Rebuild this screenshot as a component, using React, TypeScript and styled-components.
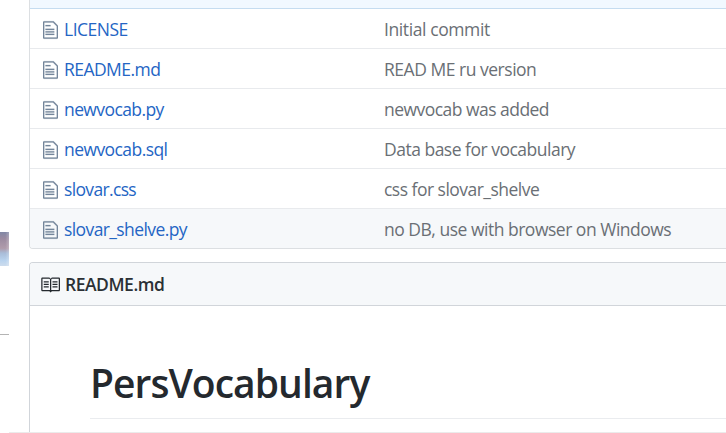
import React from 'react';
import styled, { createGlobalStyle } from 'styled-components';

const GlobalStyle = createGlobalStyle`
  * { box-sizing: border-box; }
  body {
    margin: 0;
    background: #fff;
    overflow: hidden;
    font-family: 'Open Sans', 'Noto Sans', sans-serif;
  }
`;

const Page = styled.div`
  display: flex;
  width: 726px;
  height: 433px;
  overflow: hidden;
`;

const Sidebar = styled.aside`
  width: 9px;
  flex: none;
  padding-top: 232px;
`;

const Photo = styled.div`
  height: 34px;
  background:
    linear-gradient(90deg, transparent 60%, rgba(255, 255, 255, 0.25)),
    linear-gradient(#8187a5 0%, #9c8ba0 20%, #b09bab 48%, #a9bcd8 62%, #b9d3ee 84%, #cddced 100%);
`;

const SidebarRule = styled.div`
  height: 1px;
  margin-top: 68px;
  background: #b4b4b4;
`;

const Main = styled.main`
  width: 717px;
  flex: none;
  display: flex;
  flex-direction: column;
  padding-left: 20px;
  border-bottom: 1px solid #ebebeb;
`;

const FileBox = styled.section`
  height: 249px;
  flex: none;
  border: solid #dcdfe2;
  border-width: 0 0 1px 1px;
  border-radius: 0 0 0 4px;
  overflow: hidden;
`;

const CommitBar = styled.div`
  height: 9px;
  background: #f1f8ff;
  border-bottom: 1px solid #c5dcf0;
`;

const Row = styled.div<{ $active?: boolean }>`
  display: grid;
  grid-template-columns: 15px 314px 1fr;
  column-gap: 6px;
  align-items: center;
  height: 40px;
  padding-left: 13px;
  background: ${(p) => (p.$active ? '#f6f8fa' : '#fff')};
  border-bottom: 1px solid #e8eaed;
  &:last-child { height: 39px; border-bottom: 0; }
`;

const Label = styled.span<{ $spacing: number }>`
  font-size: 17.5px;
  line-height: 24px;
  letter-spacing: ${(p) => p.$spacing}px;
  white-space: pre;
`;

const FileName = styled(Label)`
  color: #2465c4;
`;

const Message = styled(Label)`
  color: #6a6f75;
`;

const Icon = styled.svg<{ $w: number; $color: string }>`
  width: ${(p) => p.$w}px;
  height: 20px;
  display: block;
  fill: ${(p) => p.$color};
`;

const FileGlyph = styled(Icon)`
  margin-top: 2px;
  stroke: #74859a;
  stroke-width: 0.15;
`;

const BookGlyph = styled(Icon)`
  margin-top: 1px;
`;

const ReadmeBox = styled.section`
  flex: 1;
  margin-top: 13px;
  border: solid #d1d5da;
  border-width: 1px 0 0 1px;
  border-radius: 4px 0 0 0;
  overflow: hidden;
`;

const ReadmeHeader = styled.header`
  display: flex;
  align-items: center;
  gap: 5px;
  height: 43px;
  padding-left: 10px;
  background: #f6f8fa;
  border-bottom: 1px solid #d1d5da;
`;

const ReadmeTitle = styled(Label)`
  color: #2b3035;
  font-weight: 600;
`;

const Article = styled.article`
  padding: 50px 0 0 60px;
`;

const Heading = styled.h1`
  margin: 0;
  height: 63px;
  border-bottom: 1px solid #eaecef;
  color: #24292e;
  font-size: 39px;
  font-weight: 600;
  line-height: 54px;
  letter-spacing: -0.95px;
`;

const files = [
  { name: 'LICENSE', ns: -0.5, message: 'Initial commit', ms: -0.4 },
  { name: 'README.md', ns: -0.55, message: 'READ ME ru version', ms: -0.48 },
  { name: 'newvocab.py', ns: -0.6, message: 'newvocab was added', ms: -0.53 },
  { name: 'newvocab.sql', ns: -0.57, message: 'Data base for vocabulary', ms: -0.5 },
  { name: 'slovar.css', ns: -0.65, message: 'css for slovar_shelve', ms: -0.52 },
  { name: 'slovar_shelve.py', ns: -0.6, message: 'no DB, use with browser on Windows', ms: -0.49 },
];

function FileIcon() {
  return (
    <FileGlyph $w={15} $color="#74859a" viewBox="0 0 12 16" aria-hidden="true">
      <path d="M6 5H2V4h4v1zM2 8h7V7H2v1zm0 2h7V9H2v1zm0 2h7v-1H2v1zm10-7.5V14c0 .55-.45 1-1 1H1c-.55 0-1-.45-1-1V2c0-.55.45-1 1-1h7.5L12 4.5zM11 5L8 2H1v12h10V5z" />
    </FileGlyph>
  );
}

function BookIcon() {
  return (
    <BookGlyph $w={20} $color="#24292e" viewBox="0 0 16 16" aria-hidden="true">
      <path d="M3 5h4v1H3V5zm0 3h4V7H3v1zm0 2h4V9H3v1zm11-5h-4v1h4V5zm0 2h-4v1h4V7zm0 2h-4v1h4V9zm2-6v9c0 .55-.45 1-1 1H9.5l-1 1-1-1H2c-.55 0-1-.45-1-1V3c0-.55.45-1 1-1h5.5l1 1 1-1H15c.55 0 1 .45 1 1zm-8 .5L7.5 3H2v9h6V3.5zm7-.5H9.5l-.5.5V12h6V3z" />
    </BookGlyph>
  );
}

export default function App() {
  return (
    <>
      <GlobalStyle />
      <Page>
        <Sidebar>
          <Photo />
          <SidebarRule />
        </Sidebar>
        <Main>
          <FileBox>
            <CommitBar />
            {files.map((f, i) => (
              <Row key={f.name} $active={i === files.length - 1}>
                <FileIcon />
                <FileName $spacing={f.ns}>{f.name}</FileName>
                <Message $spacing={f.ms}>{f.message}</Message>
              </Row>
            ))}
          </FileBox>
          <ReadmeBox>
            <ReadmeHeader>
              <BookIcon />
              <ReadmeTitle $spacing={-0.47}>README.md</ReadmeTitle>
            </ReadmeHeader>
            <Article>
              <Heading>PersVocabulary</Heading>
            </Article>
          </ReadmeBox>
        </Main>
      </Page>
    </>
  );
}
